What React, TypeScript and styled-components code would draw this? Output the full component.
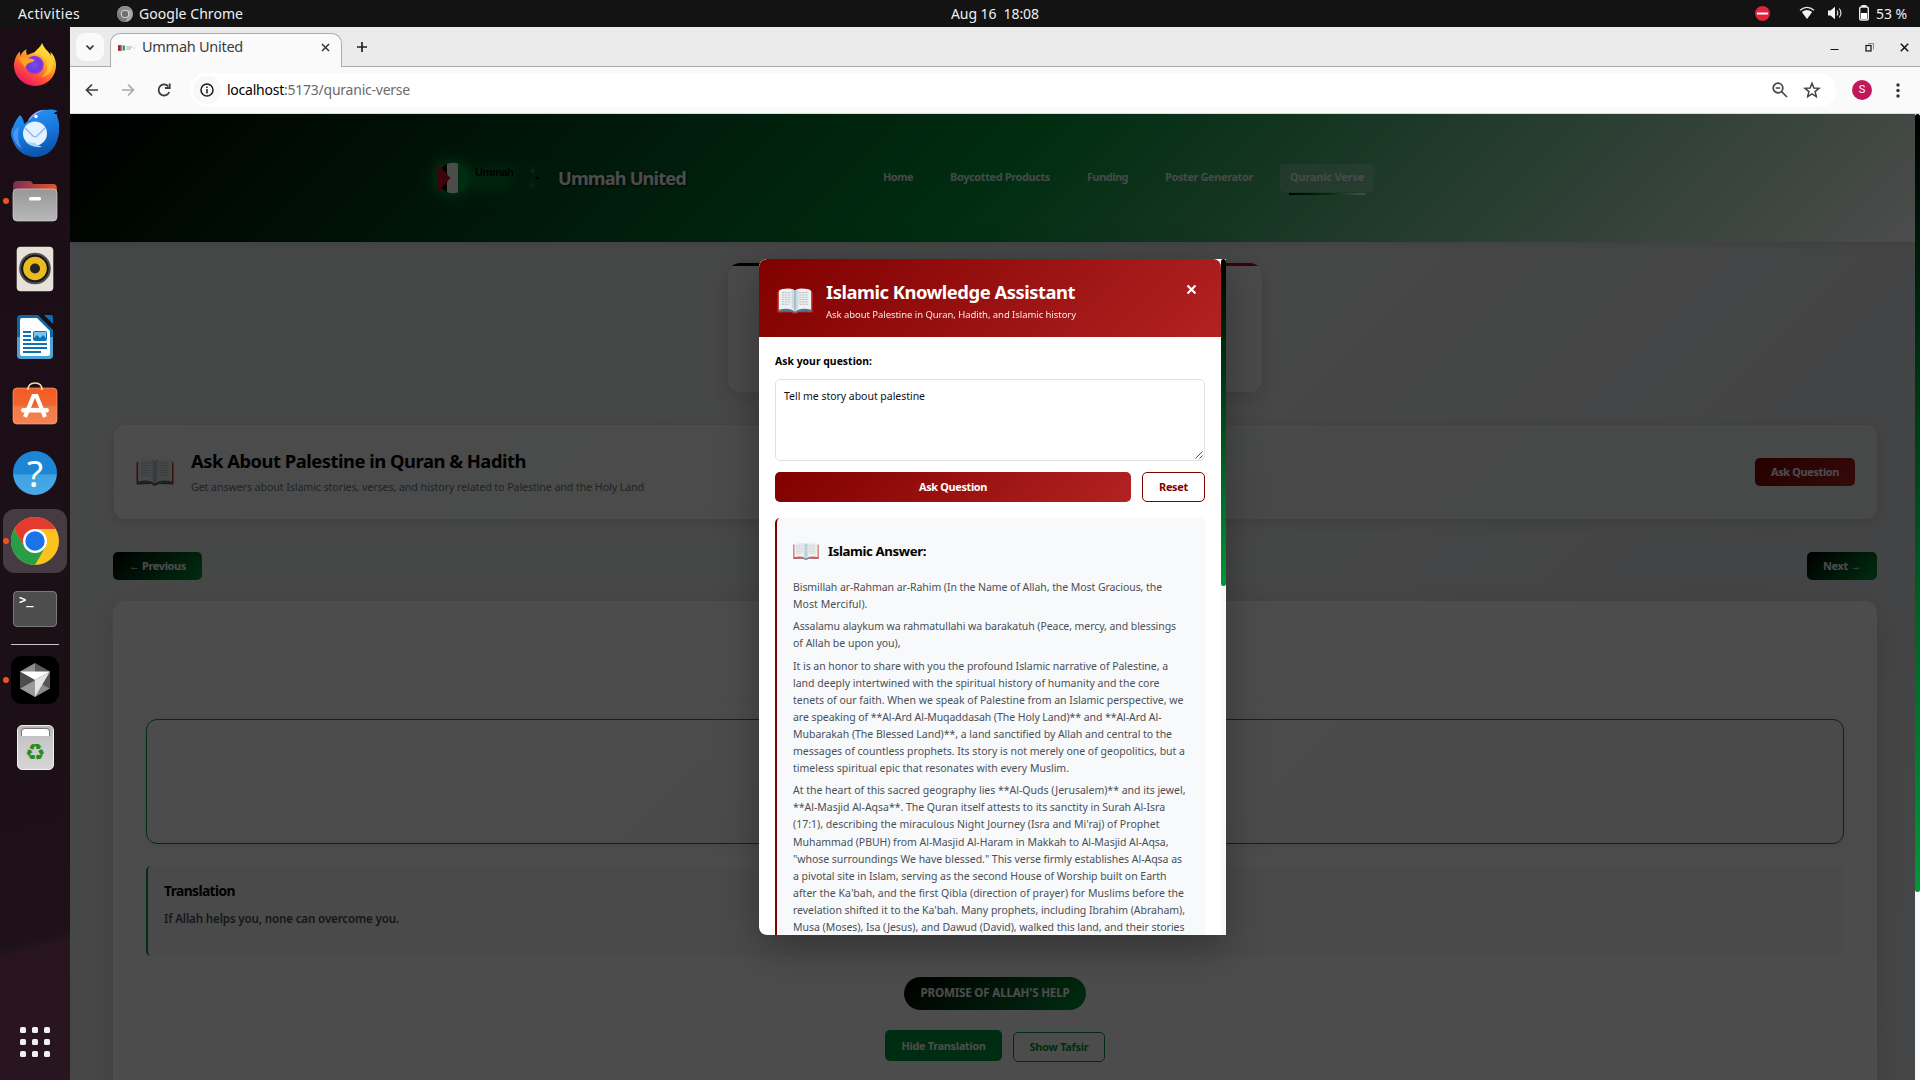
import React, { useLayoutEffect, useRef, useState } from "react";
import styled, { createGlobalStyle, css } from "styled-components";

const Global = createGlobalStyle`
  * { box-sizing: border-box; }
  html, body { margin: 0; padding: 0; overflow: hidden; }
  body { font-family: "Noto Sans", "Open Sans", sans-serif; }
  h1, h2, h3, p { margin: 0; }
  button { font-family: inherit; margin: 0; }
`;

const GREEN = "#009639";
const MAROON = "linear-gradient(135deg, #800000 0%, #b22222 100%)";

/* ---------- text set to a given measure ---------- */

const Run = styled.span`
  display: inline-block;
  white-space: pre;
`;

function Fit({ w, children }: { w: number; children: string }) {
  const ref = useRef<HTMLSpanElement>(null);
  const [spacing, setSpacing] = useState(0);
  useLayoutEffect(() => {
    const el = ref.current;
    if (!el) return;
    const range = document.createRange();
    range.selectNodeContents(el);
    const natural = range.getBoundingClientRect().width;
    setSpacing((w - natural) / children.length);
  }, [w, children]);
  return (
    <Run ref={ref} style={{ letterSpacing: `${spacing}px` }}>
      {children}
    </Run>
  );
}

/* ---------- desktop ---------- */

const Desktop = styled.div`
  width: 1920px;
  height: 1080px;
  display: flex;
  flex-direction: column;
  overflow: hidden;
  background: #131313;
`;

const TopBar = styled.div`
  height: 27px;
  flex: none;
  display: grid;
  grid-template-columns: 951px 88px 1fr;
  align-items: center;
  color: #f0f0f0;
  font-size: 14px;
  line-height: 26px;
`;

const TopLeft = styled.div`
  display: flex;
  align-items: center;
  padding-left: 18px;
  svg { margin: 0 6px 0 37px; }
`;

const TopRight = styled.div`
  display: flex;
  align-items: center;
  justify-content: flex-end;
  padding-right: 13px;
`;

const StatusIcon = styled.svg<{ $gap: number }>`
  margin-right: ${(p) => p.$gap}px;
  margin-top: -1px;
  flex: none;
`;

const Body = styled.div`
  flex: 1;
  display: flex;
  min-height: 0;
`;

const DockBar = styled.nav`
  width: 70px;
  flex: none;
  display: flex;
  flex-direction: column;
  align-items: center;
  padding-top: 4px;
  background: linear-gradient(165deg, #1b0d16 0%, #1c1016 70%, #1e1218 86%, #27141f 87%, #28151f 100%);
`;

const Slot = styled.div<{ $active?: boolean; $lift?: number }>`
  width: 64px;
  height: 64px;
  margin: 2px 0;
  padding-bottom: ${(p) => p.$lift ?? 0}px;
  flex: none;
  display: flex;
  align-items: center;
  justify-content: center;
  border-radius: 12px;
  position: relative;
  background: ${(p) => (p.$active ? "#473b43" : "transparent")};
`;

const Running = styled.i`
  position: absolute;
  left: 0;
  top: 29px;
  width: 6px;
  height: 6px;
  border-radius: 3px;
  background: #e95420;
`;

const DockRule = styled.div`
  width: 48px;
  height: 1px;
  margin: 1px 0;
  flex: none;
  background: #c9c5c8;
`;

const AppGrid = styled.div`
  margin-top: auto;
  margin-bottom: 23px;
  display: grid;
  grid-template-columns: repeat(3, 6px);
  grid-auto-rows: 6px;
  gap: 6px;
  i { background: #f1f1f1; border-radius: 1.5px; }
`;

/* ---------- browser chrome ---------- */

const Browser = styled.div`
  flex: 1;
  display: flex;
  flex-direction: column;
  min-width: 0;
  background: #fafafa;
`;

const TabStrip = styled.div`
  height: 40px;
  flex: none;
  display: flex;
  background: #ebebeb;
  box-shadow: inset 0 -1px 0 #acacac;
`;

const TabSearch = styled.div`
  width: 28px;
  height: 28px;
  margin: 6px 6px 0;
  border-radius: 9px;
  background: #fafafa;
  display: flex;
  align-items: center;
  justify-content: center;
`;

const Tab = styled.div`
  width: 232px;
  height: 34px;
  margin-top: 6px;
  border: 1px solid #acacac;
  border-bottom: 0;
  border-radius: 10px 10px 0 0;
  background: #fafafa;
  display: flex;
  align-items: center;
  padding: 0 10px 6px 7px;
  font-size: 14.5px;
  line-height: 20px;
  color: #3c3c3c;
  > span { margin: -4px 0 0 7px; }
  > svg:last-child { margin-left: auto; margin-right: 1px; }
`;

const PlusIcon = styled.svg`
  margin: 14px 0 0 14px;
`;

const WindowButtons = styled.div`
  margin-left: auto;
  display: flex;
  align-items: center;
  gap: 26px;
  padding: 0 11px 0 0;
  height: 40px;
`;

const Toolbar = styled.div`
  height: 47px;
  flex: none;
  display: flex;
  align-items: center;
  border-bottom: 1px solid #dcdcdc;
  padding: 0 0 1px 13px;
`;

const NavIcons = styled.div`
  display: flex;
  gap: 18px;
  width: 107px;
`;

const Omnibox = styled.div`
  width: 1646px;
  height: 34px;
  border-radius: 17px;
  background: #fff;
  display: flex;
  align-items: center;
  padding: 0 15px 0 3px;
  font-size: 14px;
  color: #6b6b6b;
  b { font-weight: 400; color: #000; }
`;

const InfoChip = styled.div`
  width: 28px;
  height: 28px;
  border-radius: 14px;
  background: #f8f8f8;
  display: flex;
  align-items: center;
  justify-content: center;
  margin-right: 6px;
`;

const OmniActions = styled.div`
  margin-left: auto;
  display: flex;
  gap: 14px;
`;

const Avatar = styled.div`
  width: 20px;
  height: 20px;
  margin-left: 16px;
  border-radius: 50%;
  background: #c2185b;
  color: #fff;
  font: 11px/20px Roboto, sans-serif;
  text-align: center;
`;

const MoreIcon = styled.svg`
  margin-left: 24px;
`;

/* ---------- site ---------- */

const Viewport = styled.div`
  flex: 1;
  display: flex;
  position: relative;
  min-height: 0;
  overflow: hidden;
  background: #f8f9fb;
`;

const Site = styled.div`
  width: 1845px;
  height: 966px;
  display: flex;
  flex-direction: column;
  overflow: hidden;
  background: linear-gradient(135deg, #ebedf0 0%, #eceeee 50%, #e1e3e6 75%, #e6e8ea 100%);
`;

const thumb = css`
  background: linear-gradient(180deg, #000 0%, ${GREEN} 100%);
  border-radius: 3px;
`;

const PageThumb = styled.div`
  width: 5px;
  height: 778px;
  ${thumb}
`;

const SiteHeader = styled.header`
  height: 128px;
  flex: none;
  display: flex;
  align-items: center;
  padding: 0 541px 0 361px;
  background: linear-gradient(135deg, #000 0%, ${GREEN} 50%, #fff 100%);
  box-shadow: 0 2px 8px rgba(0, 0, 0, 0.1);
  position: relative;
  z-index: 1;
`;

const Brand = styled.div`
  font-size: 18.2px;
  font-weight: 700;
  line-height: 28px;
  color: #fff;
  text-shadow: 1px 1px 3px rgba(0, 0, 0, 0.8);
`;

const Links = styled.nav`
  margin-left: auto;
  display: flex;
  gap: 17px;
`;

const Link = styled.a<{ $on?: boolean }>`
  height: 28px;
  padding: 0 10px;
  border-radius: 4px;
  position: relative;
  font-size: 10.9px;
  font-weight: 700;
  line-height: 26px;
  white-space: nowrap;
  color: rgba(255, 255, 255, 0.92);
  ${(p) =>
    p.$on &&
    css`
      background: rgba(255, 255, 255, 0.2);
      &::after {
        content: "";
        position: absolute;
        left: 9px;
        right: 9px;
        bottom: -3px;
        height: 2px;
        background: linear-gradient(90deg, #000, ${GREEN}, #fff);
      }
    `}
`;

const Content = styled.main`
  display: flex;
  flex-direction: column;
  padding: 21px 38px 0 43px;
`;

const IntroCard = styled.section`
  width: 534px;
  height: 129px;
  flex: none;
  margin: 0 auto 33px;
  border-radius: 12px;
  background: #f7f7f8;
  overflow: hidden;
  box-shadow: 0 5px 20px rgba(0, 0, 0, 0.12);
  &::before {
    content: "";
    display: block;
    height: 3px;
    background: linear-gradient(90deg, #000 0 33%, ${GREEN} 33% 66%, #b3141f 66%);
  }
`;

const AskCard = styled.section`
  height: 94px;
  margin-left: 1px;
  display: flex;
  align-items: center;
  padding: 0 22px;
  border-radius: 11px;
  background: linear-gradient(135deg, #fdfdfd 0%, #f8faf9 35%, #f0f1f3 70%, #eff0f2 100%);
  box-shadow: 0 3px 14px rgba(0, 0, 0, 0.12);
`;

const AskCopy = styled.div`
  margin-left: 17px;
  padding-top: 2px;
  h2 {
    font-size: 18.4px;
    line-height: 27px;
    font-weight: 700;
    color: #000;
  }
  p {
    font-size: 10.7px;
    line-height: 26px;
    color: #6c757d;
  }
`;

const Button = styled.button<{ $w: number; $bg: string; $h?: number; $line?: string }>`
  width: ${(p) => p.$w}px;
  height: ${(p) => p.$h ?? 28}px;
  flex: none;
  padding: 0;
  border: ${(p) => (p.$line ? `1px solid ${p.$line}` : "0")};
  border-radius: 5px;
  background: ${(p) => p.$bg};
  color: ${(p) => p.$line ?? "#fff"};
  font-size: 10.9px;
  font-weight: 700;
  line-height: 26px;
  text-align: center;
`;

const PushRight = styled.div`
  margin-left: auto;
`;

const Pager = styled.div`
  display: flex;
  justify-content: space-between;
  margin: 33px 0 21px;
`;

const VerseCard = styled.section`
  height: 600px;
  flex: none;
  padding: 0 33px;
  border-radius: 12px;
  background: #fdfdfd;
  box-shadow: 0 7px 27px rgba(0, 0, 0, 0.13);
`;

const VerseHead = styled.div`
  height: 96px;
  border-bottom: 1px solid #f6f7f8;
`;

const ArabicBox = styled.div`
  height: 125px;
  margin: 22px 0;
  border: 1px solid ${GREEN};
  border-radius: 11px;
  background: linear-gradient(135deg, #fdfdfd 0%, #f9f9f9 40%, #f8faf9 60%, #f8f8f8 100%);
  box-shadow: 0 3px 10px rgba(0, 150, 57, 0.08);
`;

const Translation = styled.div`
  height: 90px;
  padding: 14px 16px;
  border-left: 2px solid ${GREEN};
  border-radius: 5px;
  background: #f7f8f8;
  h3 {
    font-size: 13.8px;
    line-height: 22px;
    font-weight: 700;
    color: #000;
  }
  p {
    margin-top: 7px;
    font-size: 11.6px;
    line-height: 20px;
    font-weight: 600;
    color: #495057;
  }
`;

const Theme = styled.div`
  width: 182px;
  height: 33px;
  margin: 21px auto 20px;
  border-radius: 17px;
  background: linear-gradient(135deg, #000, ${GREEN});
  color: #fff;
  font-size: 11.6px;
  font-weight: 700;
  line-height: 32px;
  text-align: center;
`;

const Actions = styled.div`
  display: flex;
  justify-content: center;
  align-items: flex-start;
  gap: 11px;
  > :last-child { margin-top: 2px; }
`;

/* ---------- modal ---------- */

const Scrim = styled.div`
  position: absolute;
  inset: 0 5px 0 0;
  z-index: 2;
  background: rgba(0, 0, 0, 0.7);
  display: flex;
  align-items: center;
  justify-content: center;
`;

const Dialog = styled.div`
  width: 467px;
  height: 676px;
  display: flex;
  overflow: hidden;
  border-radius: 8px 0 0 8px;
  background: #fff;
  box-shadow: 0 13px 40px rgba(0, 0, 0, 0.3);
`;

const DialogMain = styled.div`
  width: 462px;
  display: flex;
  flex-direction: column;
`;

const DialogTrack = styled.div`
  width: 5px;
  background: #f8f9fb;
`;

const DialogThumb = styled.div`
  height: 327px;
  ${thumb}
`;

const DialogHead = styled.div`
  height: 78px;
  flex: none;
  display: flex;
  padding: 0 24px 0 18px;
  align-items: center;
  border-radius: 8px 8px 0 0;
  background: ${MAROON};
  color: #fff;
  > svg:first-child { margin-top: 6px; }
  > svg:last-child { margin: -17px 0 0 auto; }
`;

const DialogTitles = styled.div`
  margin-left: 13px;
  padding-top: 4px;
  h2 {
    font-size: 18.4px;
    line-height: 28px;
    font-weight: 700;
  }
  p {
    font-size: 9.5px;
    line-height: 17px;
    opacity: 0.9;
  }
`;

const DialogBody = styled.div`
  flex: 1;
  padding: 16px;
`;

const Label = styled.label`
  display: block;
  height: 26px;
  font-size: 10.4px;
  font-weight: 700;
  line-height: 16px;
  color: #000;
`;

const Field = styled.div`
  height: 82px;
  display: flex;
  justify-content: space-between;
  border: 1px solid #dfe1e8;
  border-radius: 5px;
  padding: 8px 1px 1px 8px;
  font-size: 10.5px;
  line-height: 17px;
  color: #111;
  > svg { align-self: flex-end; }
`;

const FormActions = styled.div`
  display: flex;
  gap: 11px;
  margin: 11px 0 16px;
`;

const Answer = styled.article`
  height: 600px;
  padding: 16px 16px 0;
  border-left: 2px solid #800000;
  border-radius: 5px;
  background: #f8f9fb;
`;

const AnswerHead = styled.div`
  display: flex;
  align-items: center;
  gap: 9px;
  height: 34px;
  margin-bottom: 10.6px;
  > svg { opacity: 0.85; }
  h3 {
    font-size: 13.2px;
    font-weight: 700;
    line-height: 33px;
    color: #000;
  }
`;

const Para = styled.p`
  display: flex;
  flex-direction: column;
  align-items: flex-start;
  margin-bottom: 5.36px;
  font-size: 10.5px;
  line-height: 17.07px;
  color: #495057;
`;

/* ---------- drawings ---------- */

function Book({ w, h }: { w: number; h: number }) {
  return (
    <svg width={w} height={h} viewBox="0 0 38 28" preserveAspectRatio="none">
      <path d="M.5 4.5 2 3.500H36L37.500 4.500V26.500L22 26 21 27.500H17L16 26 .5 26.500Z" fill="#c9322b" />
      <path d="M2 24 Q11 21 17 24.500L19 26 21 24.500Q27 21 36 24V25.500Q27 23.500 21 26.500H17Q11 23.500 2 25.500Z" fill="#3f7f9d" />
      <path d="M2 3Q4 1.500 6 1.200 13 0 17.500 1.500L19 3 20.500 1.500Q25 0 32 1.200 34 1.500 36 3V23.500Q25 20.500 19 25.500 13 20.500 2 23.500Z" fill="#eef1f2" />
      <path d="M15.500 1.200 19 3 22.500 1.200V21.500Q20 23 19 25.500 18 23 15.500 21.500Z" fill="#b9d2dc" opacity=".7" />
      <path d="M19 3V25" stroke="#7f9aa6" strokeWidth=".9" />
      <path d="M5 5H15M5 7.500H14.500M5 10H15M5 12.500H14M5 15H15M5 17.500H13M23 5H33M23.500 7.500H33M23 10H32M23.500 12.500H33M23 15H33M24 17.500H33" stroke="#a9adb0" strokeWidth=".8" strokeDasharray="2.6 .6" />
    </svg>
  );
}

function ChromeLogo({ size, mono }: { size: number; mono?: boolean }) {
  const c = mono ? ["#8c8c8c", "#a8a8a8", "#7a7a7a", "#6f6f6f", "#e5e5e5"] : ["#e33b2e", "#fcc31e", "#2a9d48", "#1a73e8", "#fff"];
  return (
    <svg width={size} height={size} viewBox="0 0 48 48">
      <circle cx="24" cy="24" r="24" fill={c[1]} />
      <path d="M24 24 3.200 12A24 24 0 0 1 44.800 12H24Z" fill={c[0]} />
      <path d="M3.200 12A24 24 0 0 0 24 48L34.400 30 24 36 13.600 30Z" fill={c[2]} />
      <path d="M3.200 12 13.600 30 24 12Z" fill={c[0]} />
      <circle cx="24" cy="24" r="12" fill={c[4]} />
      <circle cx="24" cy="24" r="9.700" fill={c[3]} />
    </svg>
  );
}

const LogoSvg = styled.svg`
  flex: none;
  margin-right: 7px;
  overflow: visible;
  filter: drop-shadow(0 0 4px rgba(0, 190, 70, 0.6)) drop-shadow(0 0 9px rgba(0, 200, 75, 0.7));
`;

function Logo() {
  return (
    <LogoSvg width="120" height="44" viewBox="0 0 120 44">
      <defs>
        <clipPath id="flag"><circle cx="22" cy="22" r="15.200" /></clipPath>
      </defs>
      <g clipPath="url(#flag)">
        <rect x="6" y="6" width="10" height="32" fill="#000" />
        <rect x="16" y="6" width="11" height="32" fill="#fff" />
        <rect x="27" y="6" width="12" height="32" fill={GREEN} />
      </g>
      <path d="M6 7 19.500 22 6 37Z" fill="#ce1126" />
      <text x="44" y="20" fontFamily="Liberation Sans" fontWeight="700" fontSize="11.300" textLength="39" fill="#000">Ummah</text>
      <text x="44" y="32" fontFamily="Liberation Sans" fontWeight="700" fontSize="11.300" textLength="33" fill="#007a33">United</text>
      <ellipse cx="101.500" cy="15" rx="1.800" ry="2.200" fill="#008a35" />
      <ellipse cx="101.500" cy="29" rx="1.800" ry="2.200" fill="#008a35" />
      <circle cx="106.500" cy="22" r="1.600" fill="#000" />
    </LogoSvg>
  );
}

const Firefox = () => (
  <svg width="44" height="44" viewBox="0 0 44 44">
    <defs>
      <linearGradient id="ff" x1=".8" y1="0" x2=".2" y2="1">
        <stop offset="0" stopColor="#fff14a" /><stop offset=".4" stopColor="#ffa41f" /><stop offset=".7" stopColor="#ff4a3b" /><stop offset="1" stopColor="#e80a75" />
      </linearGradient>
      <radialGradient id="ffp"><stop offset="0" stopColor="#7a4df0" /><stop offset=".7" stopColor="#7337d8" /><stop offset="1" stopColor="#a938df" /></radialGradient>
    </defs>
    <path d="M29 1C28 5 24 7 22 10L14 13C13 10 13 9 13.500 7 10 9 8 12 7.500 14 7 12 7 11 7 9.500 2 14 1 20 1 24A21 20.500 0 0 0 43 23C43 17 40 12 37.500 10 37.500 12 38 13 38 14 36 9 31 7 29 1Z" fill="url(#ff)" />
    <path d="M29 1C28 5 23 7 21 12 27 12 33 15 34 22 35 28 32 33 28 35 36 34 41 28 40 20 38 11 31 8 29 1Z" fill="#ffd93b" opacity=".65" />
    <circle cx="21.500" cy="23" r="9.300" fill="url(#ffp)" />
    <path d="M6 17C9 14 13 15 15 16.500 18 16 20 17.500 22 17.500 21 20 18 20.500 16 21 14 22 12 24 12 26 10 22 8 20 6 17Z" fill="#ffa41f" />
  </svg>
);

const Thunderbird = () => (
  <svg width="48" height="48" viewBox="0 0 48 48">
    <defs><linearGradient id="tb" x1="0" y1="0" x2=".3" y2="1"><stop offset="0" stopColor="#2a9af5" /><stop offset=".6" stopColor="#1777dc" /><stop offset="1" stopColor="#0d56ad" /></linearGradient></defs>
    <path d="M17 12C20 5 28 0 36 1 41 0 44 1 47 2 44 3 43 4 43 5 46 5 47 6 46 7 49 14 49 24 46 32A23 22.500 0 0 1 2 32C-1 26 0 20 2 18 3 15 6 9 9 6 11 8 13 11 13 15Z" fill="url(#tb)" />
    <path d="M17 12C20 6 26 1 33 1 26 3 21 9 17 12Z" fill="#b79cf0" />
    <path d="M2 25Q3 35 11 40 5 30 8 18 3 20 2 25Z" fill="#6aa8ff" opacity=".6" />
    <ellipse cx="24" cy="24.500" rx="12" ry="12" fill="#e4f2ff" />
    <path d="M14 19 22 27Q24 28.500 26 27L34 19" fill="none" stroke="#7fb6ee" strokeWidth="1.200" />
    <path d="M15 33Q20 39 31 38 26 36 24 34Z" fill="#a8d4ff" />
    <circle cx="25" cy="7.500" r="1.700" fill="#fff" />
  </svg>
);

const Files = () => (
  <svg width="46" height="42" viewBox="0 0 46 42">
    <defs><linearGradient id="fl"><stop offset="0" stopColor="#7c2d55" /><stop offset="1" stopColor="#e8572a" /></linearGradient><linearGradient id="flg" x2="0" y2="1"><stop offset="0" stopColor="#979797" /><stop offset="1" stopColor="#b8b8b8" /></linearGradient></defs>
    <path d="M1 6Q1 1 5 1H17Q20 1 21 4H41Q45 4 45 9V20H1Z" fill="url(#fl)" />
    <rect x="1" y="9" width="44" height="32" rx="4" fill="url(#flg)" stroke="#d0d0d0" strokeWidth=".7" />
    <rect x="17" y="17" width="12" height="3.500" rx="1.500" fill="#fff" />
  </svg>
);

const Rhythmbox = () => (
  <svg width="38" height="46" viewBox="0 0 38 46">
    <rect x=".7" y=".7" width="36.600" height="44.600" rx="4" fill="#e6e2d8" />
    <circle cx="19" cy="22.500" r="15.800" fill="#4c4c50" /><circle cx="19" cy="22.500" r="13.800" fill="#15161c" /><circle cx="19" cy="22.500" r="11.800" fill="#eabb1e" /><circle cx="19" cy="22.500" r="5" fill="#242424" />
  </svg>
);

const Writer = () => (
  <svg width="38" height="46" viewBox="0 0 38 46">
    <path d="M1 5Q1 1 5 1H22L37 16V41Q37 45 33 45H5Q1 45 1 41Z" fill="#0b6aa6" />
    <path d="M1 23H37V41Q37 45 33 45H5Q1 45 1 41Z" fill="#4aa5d6" />
    <path d="M28 1H35Q37 1 37 3V10Z" fill="#0d6eaa" />
    <path d="M4 6Q4 4 6 4H21L34 17V40Q34 42 32 42H6Q4 42 4 40Z" fill="#fff" />
    <path d="M7 18H15M7 22H15M7 26H15M7 30H31M7 34H31M7 38H25" stroke="#0c73b4" strokeWidth="2" />
    <rect x="17.500" y="17.500" width="13" height="9" rx="1" fill="#7cc4ec" stroke="#0c73b4" />
    <path d="M18 26V24L21 21 24 24 27 21 30 24V26Z" fill="#0c73b4" />
  </svg>
);

const Software = () => (
  <svg width="46" height="44" viewBox="0 0 46 44">
    <defs><linearGradient id="sw" x2="0" y2="1"><stop offset="0" stopColor="#f25b25" /><stop offset=".5" stopColor="#f2662f" /><stop offset=".52" stopColor="#f47a48" /><stop offset="1" stopColor="#f58350" /></linearGradient></defs>
    <rect x="1" y="7" width="44" height="36" rx="4" fill="url(#sw)" stroke="#ffb090" strokeWidth=".6" />
    <path d="M16 9Q16 2 23 2T30 9" fill="none" stroke="#f5d9a4" strokeWidth="1.700" />
    <path d="M13 36 21.500 15H24.500L33 36" fill="none" stroke="#fff" strokeWidth="4.200" />
    <rect x="9" y="27" width="28" height="4.600" rx="2.300" fill="#fff" />
  </svg>
);

const HelpGlyph = styled.div`
  width: 44px;
  height: 44px;
  border-radius: 22px;
  background: linear-gradient(#1c85d5 0 52%, #3fa3e3 54%, #4aa9e8);
  color: #fff;
  font: 37px/43px "Noto Sans", sans-serif;
  text-align: center;
`;

const Terminal = styled.div`
  width: 44px;
  height: 36px;
  border-radius: 4px;
  border: 1px solid #7a7a7a;
  background: #4d4d4d;
  color: #fff;
  font: 700 12px/15px "DejaVu Sans Mono", monospace;
  padding: 1px 0 0 5px;
`;

const Cursor = () => (
  <svg width="48" height="48" viewBox="0 0 48 48">
    <rect width="48" height="48" rx="11" fill="#000" />
    <path d="M24 7 39 15.500 24 24Z" fill="#5c5c5c" /><path d="M24 7 9 15.500 24 24Z" fill="#8f8f8f" />
    <path d="M9 15.500V32.500L24 24Z" fill="#4c4c4c" /><path d="M39 15.500V32.500L24 24Z" fill="#555" />
    <path d="M9 32.500 24 41V24Z" fill="#9a9a9a" /><path d="M39 32.500 24 41V24Z" fill="#8a8a8a" />
    <path d="M9 15.500H39L24 24Z" fill="#fff" /><path d="M39 15.500 24 41V24Z" fill="#e4e4e4" />
  </svg>
);

const TrashCan = styled.div`
  width: 37px;
  height: 45px;
  border-radius: 5px;
  border: 1px solid #f0f0f0;
  background: linear-gradient(#b5b5b5, #c6c6c6 30%, #d6d6d6);
  color: #2b8a1e;
  font: 23px/36px "DejaVu Sans", sans-serif;
  text-align: center;
  display: flex;
  flex-direction: column;
  align-items: center;
  &::before {
    content: "";
    width: 27px;
    height: 7px;
    margin-top: 2px;
    margin-bottom: -2px;
    flex: none;
    border: 1px solid #777;
    border-bottom: 0;
    border-radius: 4px 4px 0 0;
    background: #fff;
  }
`;

const stroke = (c: string, w = 2) => ({ fill: "none", stroke: c, strokeWidth: w });

/* ---------- copy ---------- */

const answer: [string, number][][] = [
  [
    ["Bismillah ar-Rahman ar-Rahim (In the Name of Allah, the Most Gracious, the", 369],
    ["Most Merciful).", 74.5],
  ],
  [
    ["Assalamu alaykum wa rahmatullahi wa barakatuh (Peace, mercy, and blessings", 383],
    ["of Allah be upon you),", 107.5],
  ],
  [
    ["It is an honor to share with you the profound Islamic narrative of Palestine, a", 375],
    ["land deeply intertwined with the spiritual history of humanity and the core", 366.5],
    ["tenets of our faith. When we speak of Palestine from an Islamic perspective, we", 390.5],
    ["are speaking of **Al-Ard Al-Muqaddasah (The Holy Land)** and **Al-Ard Al-", 368.5],
    ["Mubarakah (The Blessed Land)**, a land sanctified by Allah and central to the", 379],
    ["messages of countless prophets. Its story is not merely one of geopolitics, but a", 392],
    ["timeless spiritual epic that resonates with every Muslim.", 276],
  ],
  [
    ["At the heart of this sacred geography lies **Al-Quds (Jerusalem)** and its jewel,", 392.5],
    ["**Al-Masjid Al-Aqsa**. The Quran itself attests to its sanctity in Surah Al-Isra", 372],
    ["(17:1), describing the miraculous Night Journey (Isra and Mi'raj) of Prophet", 366.5],
    ["Muhammad (PBUH) from Al-Masjid Al-Haram in Makkah to Al-Masjid Al-Aqsa,", 375.5],
    ["\"whose surroundings We have blessed.\" This verse firmly establishes Al-Aqsa as", 389],
    ["a pivotal site in Islam, serving as the second House of Worship built on Earth", 373.5],
    ["after the Ka'bah, and the first Qibla (direction of prayer) for Muslims before the", 391],
    ["revelation shifted it to the Ka'bah. Many prophets, including Ibrahim (Abraham),", 392],
    ["Musa (Moses), Isa (Jesus), and Dawud (David), walked this land, and their stories", 391.5],
  ],
];

const links: [string, number][] = [
  ["Home", 30],
  ["Boycotted Products", 100],
  ["Funding", 41],
  ["Poster Generator", 88],
  ["Quranic Verse", 74],
];

function Dock() {
  return (
    <DockBar>
      <Slot $lift={2}><Firefox /></Slot>
      <Slot><Thunderbird /></Slot>
      <Slot><Running /><Files /></Slot>
      <Slot><Rhythmbox /></Slot>
      <Slot><Writer /></Slot>
      <Slot $lift={5}><Software /></Slot>
      <Slot><HelpGlyph>?</HelpGlyph></Slot>
      <Slot $active><Running /><ChromeLogo size={48} /></Slot>
      <Slot><Terminal>&gt;_</Terminal></Slot>
      <DockRule />
      <Slot><Running /><Cursor /></Slot>
      <Slot $lift={1}><TrashCan>♻</TrashCan></Slot>
      <AppGrid>{Array.from({ length: 9 }, (_, i) => <i key={i} />)}</AppGrid>
    </DockBar>
  );
}

function StatusBar() {
  return (
    <TopBar>
      <TopLeft>
        <Fit w={62}>Activities</Fit>
        <ChromeLogo size={16} mono />
        <Fit w={104}>Google Chrome</Fit>
      </TopLeft>
      <Fit w={88}>Aug 16  18:08</Fit>
      <TopRight>
        <StatusIcon $gap={29} width="15" height="15"><circle cx="7.500" cy="7.500" r="7.500" fill="#e0243a" /><rect x="2" y="6.500" width="11" height="2" fill="#fff" /></StatusIcon>
        <StatusIcon $gap={12} width="16" height="14" viewBox="0 0 16 14"><path d="M1 4.200Q8-1.500 15 4.200" {...stroke("#eee", 1.4)} /><path d="M2.800 6Q8 1.800 13.200 6L8 13Z" fill="#f2f2f2" /></StatusIcon>
        <StatusIcon $gap={15} width="16" height="14" viewBox="0 0 16 14"><path d="M1 4.500H3.500L8 .8V13.200L3.500 9.500H1Z" fill="#f2f2f2" /><path d="M10 4.500Q11.500 7 10 9.500M12.300 2.500Q15.500 7 12.300 11.500" {...stroke("#ddd", 1.2)} /></StatusIcon>
        <StatusIcon $gap={6} width="12" height="16" viewBox="0 0 12 16"><path d="M3.500 0H8.500V2H3.500Z" fill="#eee" /><rect x="1.700" y="2" width="8.600" height="13" rx="1.500" {...stroke("#eee", 1.4)} /><rect x="3" y="8" width="6" height="6" fill="#fff" /></StatusIcon>
        <Fit w={31}>53 %</Fit>
      </TopRight>
    </TopBar>
  );
}

function Chrome() {
  return (
    <>
      <TabStrip>
        <TabSearch><svg width="10" height="7"><path d="M1.500 1.500 5 5 8.500 1.500" {...stroke("#333", 1.7)} /></svg></TabSearch>
        <Tab>
          <svg width="17" height="6"><rect width="2.500" height="6" rx="1" fill="#c0182b" /><rect x="2.500" width="1" height="6" fill="#222" /><path d="M5.700 .5V5.500" stroke="#148a3c" strokeWidth="2" /><path d="M8 2H14M8 4H13" stroke="#aaa" strokeWidth="1" /><rect x="15.500" y="2" width="1" height="2" fill="#bcd" /></svg>
          <Fit w={101}>Ummah United</Fit>
          <svg width="9" height="9"><path d="M1 1 8 8M8 1 1 8" {...stroke("#333", 1.5)} /></svg>
        </Tab>
        <PlusIcon width="12" height="12"><path d="M6 1V11M1 6H11" {...stroke("#222", 1.7)} /></PlusIcon>
        <WindowButtons>
          <svg width="9" height="12"><path d="M.5 8.500H8.500" {...stroke("#111", 1)} /></svg>
          <svg width="9" height="9"><rect x="1" y="2.500" width="5" height="5.500" {...stroke("#111", 1.2)} /><path d="M3 .5H8.500V6.500" {...stroke("#888", 1)} /></svg>
          <svg width="9" height="9"><path d="M.8 .8 8.200 8.200M8.200 .8 .8 8.200" {...stroke("#111", 1.5)} /></svg>
        </WindowButtons>
      </TabStrip>
      <Toolbar>
        <NavIcons>
          <svg width="18" height="18"><path d="M15 9H4M9 3.500 3.500 9 9 14.500" {...stroke("#3c3c3c", 1.7)} /></svg>
          <svg width="18" height="18"><path d="M3 9H14M9 3.500 14.500 9 9 14.500" {...stroke("#a9a9a9", 1.7)} /></svg>
          <svg width="18" height="18"><path d="M14.200 11A5.500 5.500 0 1 1 13.200 5.300" {...stroke("#3c3c3c", 1.8)} /><path d="M10 7H14.700V2.500" {...stroke("#3c3c3c", 1.8)} /></svg>
        </NavIcons>
        <Omnibox>
          <InfoChip><svg width="14" height="14"><circle cx="7" cy="7" r="6" {...stroke("#1b1b1b", 1.5)} /><path d="M7 6V10.500M7 3.500V5" {...stroke("#1b1b1b", 1.5)} /></svg></InfoChip>
          <b><Fit w={57}>localhost</Fit></b>
          <Fit w={126}>:5173/quranic-verse</Fit>
          <OmniActions>
            <svg width="18" height="18"><circle cx="7" cy="7" r="4.800" {...stroke("#444", 1.7)} /><path d="M10.500 10.500 16 16M4.800 7H9.200" {...stroke("#444", 1.6)} /></svg>
            <svg width="18" height="18"><path d="M9 2.300 10.900 7 16 7.300 12.100 10.600 13.300 15.600 9 12.900 4.700 15.600 5.900 10.600 2 7.300 7.100 7Z" {...stroke("#444", 1.5)} /></svg>
          </OmniActions>
        </Omnibox>
        <Avatar>S</Avatar>
        <MoreIcon width="4" height="16"><circle cx="2" cy="3" r="1.700" fill="#333" /><circle cx="2" cy="8.500" r="1.700" fill="#333" /><circle cx="2" cy="14" r="1.700" fill="#333" /></MoreIcon>
      </Toolbar>
    </>
  );
}

const DARK_GREEN = `linear-gradient(135deg, #000, ${GREEN})`;

function Page() {
  return (
    <Site>
      <SiteHeader>
        <Logo />
        <Brand><Fit w={128}>Ummah United</Fit></Brand>
        <Links>
          {links.map(([name, w], i) => (
            <Link key={name} $on={i === 4}><Fit w={w}>{name}</Fit></Link>
          ))}
        </Links>
      </SiteHeader>
      <Content>
        <IntroCard />
        <AskCard>
          <Book w={38} h={28} />
          <AskCopy>
            <h2><Fit w={335}>{"Ask About Palestine in Quran & Hadith"}</Fit></h2>
            <p><Fit w={453}>Get answers about Islamic stories, verses, and history related to Palestine and the Holy Land</Fit></p>
          </AskCopy>
          <PushRight><Button $w={100} $bg={MAROON}><Fit w={68}>Ask Question</Fit></Button></PushRight>
        </AskCard>
        <Pager>
          <Button $w={89} $bg={DARK_GREEN}><Fit w={57}>← Previous</Fit></Button>
          <Button $w={70} $bg={DARK_GREEN}><Fit w={38}>Next →</Fit></Button>
        </Pager>
        <VerseCard>
          <VerseHead />
          <ArabicBox />
          <Translation>
            <h3><Fit w={71}>Translation</Fit></h3>
            <p><Fit w={235}>If Allah helps you, none can overcome you.</Fit></p>
          </Translation>
          <Theme><Fit w={149}>PROMISE OF ALLAH'S HELP</Fit></Theme>
          <Actions>
            <Button $w={117} $h={31} $bg={GREEN}><Fit w={84}>Hide Translation</Fit></Button>
            <Button $w={92} $h={30} $bg="transparent" $line={GREEN}><Fit w={59}>Show Tafsir</Fit></Button>
          </Actions>
        </VerseCard>
      </Content>
    </Site>
  );
}

function Assistant() {
  return (
    <Scrim>
      <Dialog>
        <DialogMain>
          <DialogHead>
            <Book w={36} h={26} />
            <DialogTitles>
              <h2><Fit w={249}>Islamic Knowledge Assistant</Fit></h2>
              <p><Fit w={250}>Ask about Palestine in Quran, Hadith, and Islamic history</Fit></p>
            </DialogTitles>
            <svg width="11" height="11"><path d="M1.500 1.500 9.500 9.500M9.500 1.500 1.500 9.500" {...stroke("#fff", 2.2)} /></svg>
          </DialogHead>
          <DialogBody>
            <Label><Fit w={97}>Ask your question:</Fit></Label>
            <Field>
              <Fit w={141}>Tell me story about palestine</Fit>
              <svg width="8" height="8"><path d="M.5 7.500 7.500 .5M4.500 7.500 7.500 4.500" {...stroke("#555", 1)} /></svg>
            </Field>
            <FormActions>
              <Button $w={356} $h={30} $bg={MAROON}><Fit w={68}>Ask Question</Fit></Button>
              <Button $w={63} $h={30} $bg="#fff" $line="#800000"><Fit w={29}>Reset</Fit></Button>
            </FormActions>
            <Answer>
              <AnswerHead>
                <Book w={26} h={18} />
                <h3><Fit w={98}>Islamic Answer:</Fit></h3>
              </AnswerHead>
              {answer.map((lines, i) => (
                <Para key={i}>
                  {lines.map(([t, w]) => <Fit key={t} w={w}>{t}</Fit>)}
                </Para>
              ))}
            </Answer>
          </DialogBody>
        </DialogMain>
        <DialogTrack><DialogThumb /></DialogTrack>
      </Dialog>
    </Scrim>
  );
}

export default function App() {
  return (
    <Desktop>
      <Global />
      <StatusBar />
      <Body>
        <Dock />
        <Browser>
          <Chrome />
          <Viewport>
            <Page />
            <PageThumb />
            <Assistant />
          </Viewport>
        </Browser>
      </Body>
    </Desktop>
  );
}
